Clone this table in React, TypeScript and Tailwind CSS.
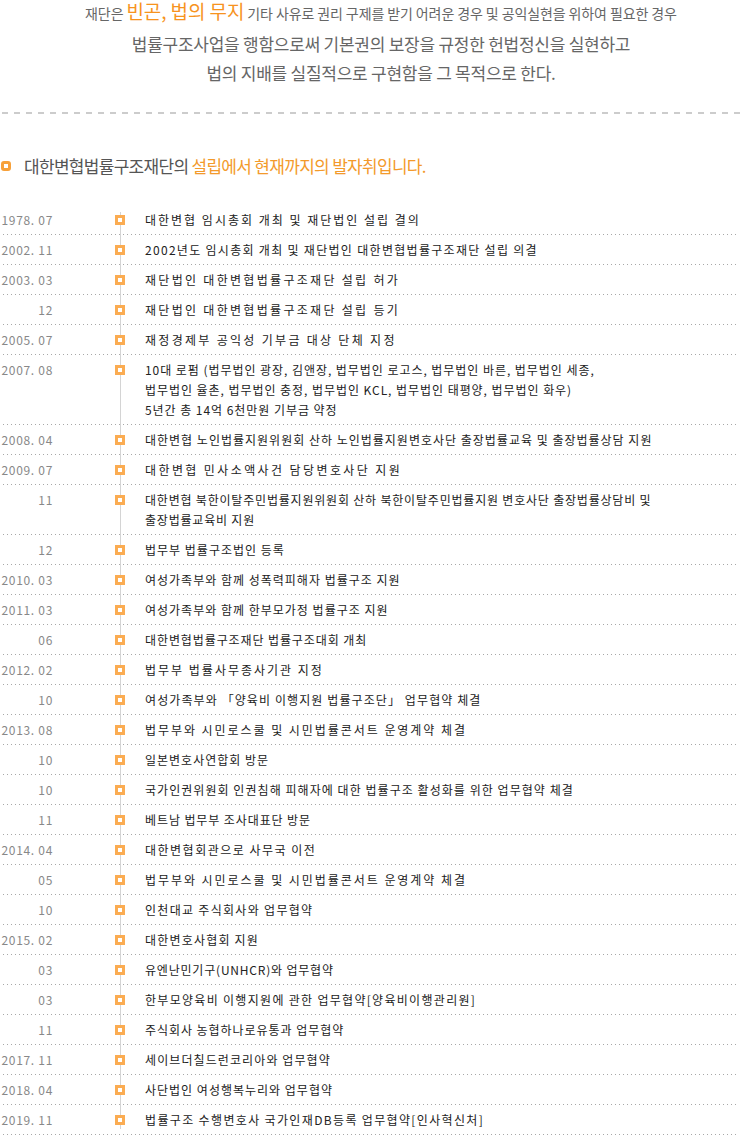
type Item = { date: string; lines: string[]; tr?: string };

const history: Item[] = [
  { date: "1978. 07", lines: ["대한변협 임시총회 개최 및 재단법인 설립 결의"], tr: "tracking-[2px]" },
  { date: "2002. 11", lines: ["2002년도 임시총회 개최 및 재단법인 대한변협법률구조재단 설립 의결"], tr: "tracking-[1.3px]" },
  { date: "2003. 03", lines: ["재단법인 대한변협법률구조재단 설립 허가"], tr: "tracking-[2.3px]" },
  { date: "12", lines: ["재단법인 대한변협법률구조재단 설립 등기"], tr: "tracking-[2.3px]" },
  { date: "2005. 07", lines: ["재정경제부 공익성 기부금 대상 단체 지정"], tr: "tracking-[2.3px]" },
  {
    date: "2007. 08",
    lines: [
      "10대 로펌 (법무법인 광장, 김앤장, 법무법인 로고스, 법무법인 바른, 법무법인 세종,",
      "법무법인 율촌, 법무법인 충정, 법무법인 KCL, 법무법인 태평양, 법무법인 화우)",
      "5년간 총 14억 6천만원 기부금 약정",
    ],
    tr: "tracking-[0.95px]",
  },
  { date: "2008. 04", lines: ["대한변협 노인법률지원위원회 산하 노인법률지원변호사단 출장법률교육 및 출장법률상담 지원"] },
  { date: "2009. 07", lines: ["대한변협 민사소액사건 담당변호사단 지원"], tr: "tracking-[2.4px]" },
  {
    date: "11",
    lines: [
      "대한변협 북한이탈주민법률지원위원회 산하 북한이탈주민법률지원 변호사단 출장법률상담비 및",
      "출장법률교육비 지원",
    ],
    tr: "tracking-[0.8px]",
  },
  { date: "12", lines: ["법무부 법률구조법인 등록"] },
  { date: "2010. 03", lines: ["여성가족부와 함께 성폭력피해자 법률구조 지원"] },
  { date: "2011. 03", lines: ["여성가족부와 함께 한부모가정 법률구조 지원"] },
  { date: "06", lines: ["대한변협법률구조재단 법률구조대회 개최"], tr: "tracking-[0.9px]" },
  { date: "2012. 02", lines: ["법무부 법률사무종사기관 지정"], tr: "tracking-[2px]" },
  { date: "10", lines: ["여성가족부와 「양육비 이행지원 법률구조단」 업무협약 체결"], tr: "tracking-[1.1px]" },
  { date: "2013. 08", lines: ["법무부와 시민로스쿨 및 시민법률콘서트 운영계약 체결"], tr: "tracking-[1.95px]" },
  { date: "10", lines: ["일본변호사연합회 방문"] },
  { date: "10", lines: ["국가인권위원회 인권침해 피해자에 대한 법률구조 활성화를 위한 업무협약 체결"], tr: "tracking-[1.05px]" },
  { date: "11", lines: ["베트남 법무부 조사대표단 방문"], tr: "tracking-[0.9px]" },
  { date: "2014. 04", lines: ["대한변협회관으로 사무국 이전"], tr: "tracking-[1.5px]" },
  { date: "05", lines: ["법무부와 시민로스쿨 및 시민법률콘서트 운영계약 체결"], tr: "tracking-[1.95px]" },
  { date: "10", lines: ["인천대교 주식회사와 업무협약"], tr: "tracking-[1.3px]" },
  { date: "2015. 02", lines: ["대한변호사협회 지원"], tr: "tracking-[1.2px]" },
  { date: "03", lines: ["유엔난민기구(UNHCR)와 업무협약"], tr: "tracking-[0.8px]" },
  { date: "03", lines: ["한부모양육비 이행지원에 관한 업무협약[양육비이행관리원]"], tr: "tracking-[1.3px]" },
  { date: "11", lines: ["주식회사 농협하나로유통과 업무협약"], tr: "tracking-[0.95px]" },
  { date: "2017. 11", lines: ["세이브더칠드런코리아와 업무협약"], tr: "tracking-[1.1px]" },
  { date: "2018. 04", lines: ["사단법인 여성행복누리와 업무협약"] },
  { date: "2019. 11", lines: ["법률구조 수행변호사 국가인재DB등록 업무협약[인사혁신처]"], tr: "tracking-[1.35px]" },
];

function Row({ item }: { item: Item }) {
  return (
    <li className="flex py-[5px] bg-[linear-gradient(to_right,#a8a8a8_1px,transparent_1px)] bg-[length:4px_1px] bg-repeat-x bg-bottom">
      <div className="w-[53px] shrink-0 text-right text-[12px] leading-[20px] tracking-[0.7px] text-[#888]">
        {item.date}
      </div>
      <div className="ml-[62px] w-[11px] shrink-0 pt-[5px]">
        <div className="relative z-10 h-[10px] w-[10px] bg-[#fbac52] p-[3px]">
          <div className="h-[4px] w-[4px] bg-white" />
        </div>
      </div>
      <div className={`ml-[19px] text-[12px] leading-[20px] text-[#222] ${item.tr ?? "tracking-[1px]"}`}>
        {item.lines.map((l, i) => (
          <div key={i}>{l}</div>
        ))}
      </div>
    </li>
  );
}

export default function App() {
  return (
    <div className="w-[742px] bg-white font-['Noto_Sans_CJK_KR',sans-serif]">
      <div className="pt-[1px] pl-[20px] text-center text-[#666]">
        <p className="text-[14px] leading-[24px] tracking-[-0.1px]">
          재단은 <span className="text-[19px] leading-[20px] text-[#f7931e]">빈곤, 법의 무지</span> 기타 사유로 권리
          구제를 받기 어려운 경우 및 공익실현을 위하여 필요한 경우
        </p>
        <p className="mt-[7px] text-[17px] leading-[24px] tracking-[-0.25px]">
          법률구조사업을 행함으로써 기본권의 보장을 규정한 헌법정신을 실현하고
        </p>
        <p className="mt-[5px] text-[17px] leading-[24px] tracking-[-0.25px]">
          법의 지배를 실질적으로 구현함을 그 목적으로 한다.
        </p>
      </div>

      <div className="mx-[2px] mt-[27px] h-[2px] bg-[linear-gradient(to_right,#cccccc_6px,transparent_6px)] bg-[length:12px_2px] bg-repeat-x" />

      <h2 className="mt-[40px] flex items-center text-[17px] leading-[24px] tracking-[-0.7px] text-[#555] font-normal">
        <span className="ml-[1px] h-[10px] w-[10px] rounded-[3px] border-[3px] border-[#f7a13a]" />
        <span className="ml-[13px]">
          대한변협법률구조재단의 <span className="text-[#f39a2b]">설립에서 현재까지의 발자취입니다.</span>
        </span>
      </h2>

      <div className="relative mt-[27px]">
        <div className="absolute left-[120px] top-[7px] bottom-[6px] w-px bg-[#d4d4d4]" />
        <ul className="mr-[4px]">
          {history.map((item, i) => (
            <Row key={i} item={item} />
          ))}
        </ul>
      </div>
    </div>
  );
}
